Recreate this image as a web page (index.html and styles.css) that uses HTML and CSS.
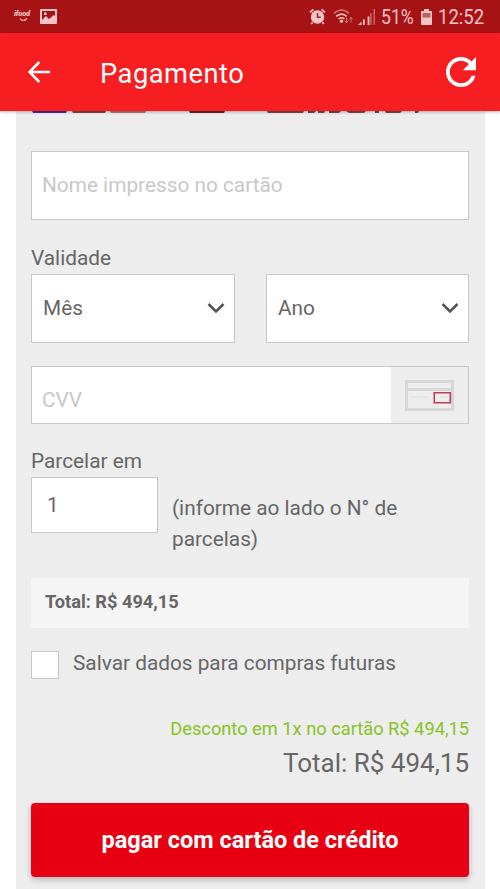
FILE: index.html
```html
<!DOCTYPE html>
<html lang="pt-BR">
<head>
<meta charset="utf-8">
<title>Pagamento</title>
<link rel="stylesheet" href="styles.css">
</head>
<body>
<div class="status">
  <span class="brand">ifood<svg class="smile" width="9" height="4" viewBox="0 0 9 4"><path d="M1 .5Q4 4.5 8 .5" fill="none" stroke="currentColor" stroke-width="1.2"/></svg></span>
  <svg class="photo" width="17" height="15" viewBox="0 0 17 15"><path fill="currentColor" fill-rule="evenodd" d="M1 0h15a1 1 0 0 1 1 1v13a1 1 0 0 1-1 1H1a1 1 0 0 1-1-1V1a1 1 0 0 1 1-1zM2 2v9l4-4 3 3 5-4 1 1V2zM4 3.5h2.5V6H4z"/></svg>
  <div class="status-right">
    <svg width="17" height="17" viewBox="0 0 17 17"><circle cx="8.5" cy="9" r="6.7" fill="currentColor"/><path d="M1 4.4 4.4 1.3M16 4.4l-3.4-3.1M3.6 14.4 2.2 16M13.4 14.4l1.4 1.6" stroke="currentColor" stroke-width="1.8" fill="none"/><path d="M8.5 5v4.3h3.3" stroke="#a22032" stroke-width="1.5" fill="none"/></svg>
    <svg class="wifi" width="21" height="17" viewBox="0 0 21 17"><g fill="none" stroke="currentColor" stroke-width="1.6"><path d="M1 5.5Q8.5-1.5 16 5.5" opacity=".55"/><path d="M3.3 8.4Q8.5 3.7 13.7 8.4"/><path d="M5.7 11Q8.5 8.5 11.3 11"/></g><circle cx="8.5" cy="13.2" r="1.6" fill="currentColor"/><path d="M13.5 9.5v5m-1.8-1.8 1.8 2 1.8-2M18 14.5v-5m-1.8 1.8 1.8-2 1.8 2" fill="none" stroke="currentColor" opacity=".5"/></svg>
    <svg class="signal" width="17" height="16" viewBox="0 0 17 16"><path d="M0 16l3.5-3.5V16zM5 10.5h1.8V16H5zM9.6 7.5h1.8V16H9.6z" fill="currentColor"/><path d="M12.3 4h1.2v12h-1.2zM15.6 0h1.2v16h-1.2z" fill="currentColor" opacity=".6"/></svg>
    <span class="pct">51%</span>
    <svg class="battery" width="11" height="16" viewBox="0 0 11 16"><path fill="currentColor" d="M3 0h5v2h2a1 1 0 0 1 1 1v12a1 1 0 0 1-1 1H1a1 1 0 0 1-1-1V3a1 1 0 0 1 1-1h2z"/><path d="M1.5 4h8v4.5h-8z" fill="#b9615f"/></svg>
    <span class="clock">12:52</span>
  </div>
</div>
<header class="appbar">
  <svg class="back" width="22" height="22" viewBox="0 0 22 22"><path d="M11.3 1 1.5 11l9.8 10M1.5 11H22" fill="none" stroke="#fff" stroke-width="2.6"/></svg>
  <h1>Pagamento</h1>
  <svg class="reload" width="30" height="30" viewBox="4 4 16 16"><path fill="#fff" d="M17.65 6.35C16.2 4.9 14.21 4 12 4c-4.42 0-7.99 3.58-7.99 8s3.57 8 7.99 8c3.73 0 6.84-2.55 7.73-6h-2.08c-.82 2.33-3.04 4-5.65 4-3.31 0-6-2.69-6-6s2.69-6 6-6c1.66 0 3.14.69 4.22 1.78L13 11h7V4l-2.35 2.35z"/></svg>
</header>
<main class="card">
  <svg class="flags" width="438" height="3" viewBox="0 0 438 3"><path d="M1 0h35l-1 2H2z" fill="#5a2699"/><path d="M41 0h34l-1 2H42z" fill="#8c4848"/><path d="M79 0h36l-1 2H80z" fill="#b17878"/><path d="M158 0h36l-1 2h-34z" fill="#6b2929"/><path d="M236 0h37l-1 2h-35zM277 0h8l-2 2h-6zM287 0h7l-1 2h-6zM298 0h12l-2 2h-10zM315 0h20l-2 2h-15zM344 0h4v2h-4zM354 0h17l-2 2h-14zM384 0h4l-1 2h-3z" fill="#83494b"/></svg>
  <div class="field name"><span>Nome impresso no cartão</span></div>
  <div class="label"><span>Validade</span></div>
  <div class="selects">
    <div class="field select"><span>Mês</span><svg width="18" height="12" viewBox="0 0 18 12"><path d="m1.5 2 7.5 7.5L16.5 2" fill="none" stroke="#555" stroke-width="2.5"/></svg></div>
    <div class="field select"><span>Ano</span><svg width="18" height="12" viewBox="0 0 18 12"><path d="m1.5 2 7.5 7.5L16.5 2" fill="none" stroke="#555" stroke-width="2.5"/></svg></div>
  </div>
  <div class="field cvv"><span>CVV</span>
    <div class="hint"><svg width="49" height="32" viewBox="0 0 49 32"><path d="M1.5 1.5h46v28h-46z" fill="none" stroke="#d7d7d7" stroke-width="3"/><path d="M1 8h47v3H1z" fill="#d7d7d7"/><path d="M6 17h17M35 17h7" stroke="#dcdcdc"/><path d="M29.3 12.8h16v10h-16z" fill="none" stroke="#c33b59" stroke-width="1.6"/></svg></div>
  </div>
  <div class="label parc"><span>Parcelar em</span></div>
  <div class="installments">
    <div class="field count">1</div>
    <p><span>(informe ao lado o N° de</span><br><span>parcelas)</span></p>
  </div>
  <div class="total-box"><span>Total: R$ 494,15</span></div>
  <div class="save"><i class="check"></i><span>Salvar dados para compras futuras</span></div>
  <div class="discount"><span>Desconto em 1x no cartão R$ 494,15</span></div>
  <div class="total"><span>Total: R$ 494,15</span></div>
  <button class="pay"><span>pagar com cartão de crédito</span></button>
</main>
</body>
</html>
```
FILE: styles.css
```css
* { box-sizing: border-box; }
html, body { margin: 0; height: 889px; overflow: hidden; }
body { background: #fff; color: #666; font-family: Roboto, sans-serif; font-size: 20.8px; line-height: 24px; }
svg { display: block; flex: none; }
span { white-space: nowrap; }

.status { height: 33px; background: #a71314; color: #f4c4c6; display: flex; align-items: center; padding: 0 16px 0 14px; }
.brand { width: 18px; height: 13px; font-size: 7.5px; line-height: 8px; font-weight: 900; font-style: italic; letter-spacing: -.2px; }
.smile { margin-left: 5px; }
.photo { margin-left: 8px; }
.status-right { margin-left: auto; display: flex; align-items: center; }
.wifi { margin-left: 7px; }
.signal { margin-left: 4px; }
.pct { margin-left: 6px; width: 35px; }
.pct, .clock { display: block; font-size: 21px; transform-origin: 0 50%; padding-top: 1px; }
.pct { transform: scaleX(.84); }
.battery { margin-left: 5px; }
.clock { margin-left: 6px; width: 46px; transform: scaleX(.88); }

.appbar { position: relative; z-index: 2; height: 78px; background: #f61e20; color: #fff; display: flex; align-items: center; padding: 0 24px 0 28px; box-shadow: 0 1px 3px rgba(0,0,0,.3); }
.appbar h1 { margin: 0 0 0 50px; font-size: 27.3px; line-height: 32px; font-weight: 400; letter-spacing: .5px; padding-top: 3px; }
.reload { margin-left: auto; }

.card { width: 469px; height: 778px; margin-left: 16px; padding: 0 16px 0 15px; background: #ededed; }
.field { background: #fff; border: 1px solid #c8c8c8; display: flex; align-items: center; }
.name { height: 69px; margin-top: 37px; padding: 0 0 1px 10px; color: #c8c8c8; }
.label { height: 24px; margin-top: 26px; }
.selects { display: flex; justify-content: space-between; margin-top: 4px; }
.select { width: 204px; height: 69px; padding: 0 9px 2px 11px; justify-content: space-between; }
.select + .select { width: 203px; }
.cvv { height: 58px; margin-top: 23px; padding-left: 10px; color: #c8c8c8; justify-content: space-between; }
.cvv > span { padding-top: 9px; }
.hint { width: 77px; height: 56px; background: #ededed; display: flex; align-items: center; justify-content: center; padding-top: 1px; }
.parc { margin-top: 25px; }
.installments { display: flex; margin-top: 4px; height: 79px; }
.count { width: 127px; height: 56px; padding-left: 15px; }
.installments p { margin: 16px 0 0 14px; line-height: 31px; }
.total-box { height: 50px; margin-top: 22px; padding: 0 14px 2px; background: #f5f5f5; font-size: 18.2px; font-weight: 700; display: flex; align-items: center; }
.save { display: flex; align-items: center; height: 28px; margin-top: 23px; }
.save span { padding-bottom: 4px; }
.check { width: 28px; height: 28px; margin-right: 14px; background: #fff; border: 1px solid #c8c8c8; }
.discount { margin-top: 38px; height: 24px; text-align: right; font-size: 18.25px; color: #87c425; }
.total { margin-top: 6px; height: 32px; line-height: 32px; text-align: right; font-size: 26px; }
.pay { display: flex; align-items: center; justify-content: center; width: 438px; height: 74px; margin-top: 24px; padding: 0; border: 0; border-radius: 4px; background: #e60012; color: #fff; font: 700 23.5px/28px Roboto, sans-serif; box-shadow: 0 3px 6px rgba(0,0,0,.22); }
```
